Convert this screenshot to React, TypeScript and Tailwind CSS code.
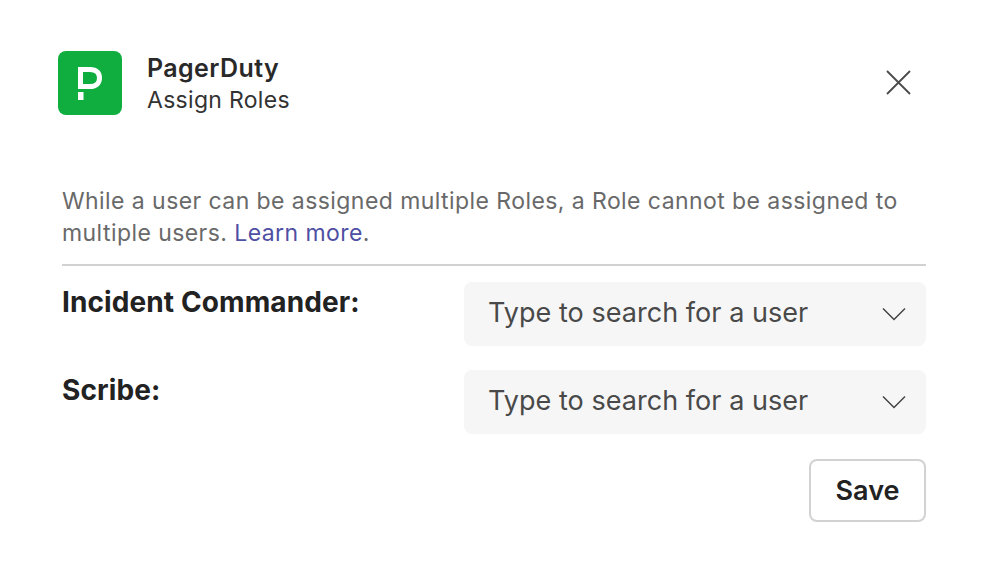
import React from 'react';

const Chevron = () => (
  <svg width="24" height="14" viewBox="0 0 24 14" fill="none" stroke="#444" strokeWidth="1.5" className="shrink-0">
    <path d="M1 1.5 L12 12.5 L23 1.5" />
  </svg>
);

const UserSelect = () => (
  <div className="w-[462px] h-16 bg-[#f6f6f6] rounded-lg flex items-center justify-between pl-6 pr-[20px]">
    <span className="text-[27px] leading-[32px] tracking-[0.04px] -mt-[2px] text-[#494949]">Type to search for a user</span>
    <Chevron />
  </div>
);

export default function App() {
  const roles = ['Incident Commander:', 'Scribe:'];

  return (
    <div className="w-[990px] h-[586px] bg-white font-['Inter',sans-serif] overflow-hidden">
      {/* Header */}
      <div className="flex items-center h-16 mt-[51px] pl-[58px] pr-[79px]">
        <svg width="64" height="64" viewBox="0 0 64 64" fill="none" className="shrink-0">
          <rect width="64" height="64" rx="8" fill="#0fae3f" />
          <path d="M20 18.5 H32 C38.5 18.5 41.5 22 41.5 27 C41.5 32 38.5 35.5 32 35.5 H25" stroke="#fff" strokeWidth="5" />
          <path d="M22.5 16 V38" stroke="#fff" strokeWidth="5" />
          <rect x="20" y="41" width="5.5" height="8" fill="#fff" />
        </svg>
        <div className="ml-[25px] flex-1 pt-0.5">
          <div className="text-[25px] leading-8 tracking-[0.4px] font-semibold text-[#292929]">PagerDuty</div>
          <div className="text-[23px] leading-8 tracking-[0.3px] text-[#333]">Assign Roles</div>
        </div>
        <svg width="25" height="25" viewBox="0 0 25 25" fill="none" stroke="#4a4a4a" strokeWidth="1.8" className="-mt-px">
          <path d="M1 1 L24 24 M24 1 L1 24" />
        </svg>
      </div>

      <div className="pl-[62px] w-[926px]">
        <p className="mt-[70px] text-[23px] leading-8 tracking-[0.43px] text-[#696969]">
          While a user can be assigned multiple Roles, a Role cannot be assigned to multiple users.{' '}
          <span className="text-[#4f4fa3]">Learn more</span>.
        </p>
        <div className="mt-[15px] h-0.5 bg-[#d2d2d2]" />

        <div className="mt-4 flex flex-col gap-6">
          {roles.map((role) => (
            <div key={role} className="flex justify-between">
              <span className="text-[28px] leading-10 tracking-[0.1px] font-bold text-[#222]">{role}</span>
              <UserSelect />
            </div>
          ))}
        </div>

        <div className="mt-[25px] flex justify-end">
          <button className="w-[117px] h-[63px] pt-0.5 border-2 border-[#d2d2d2] rounded-lg text-[27px] font-semibold text-[#222]">
            Save
          </button>
        </div>
      </div>
    </div>
  );
}
